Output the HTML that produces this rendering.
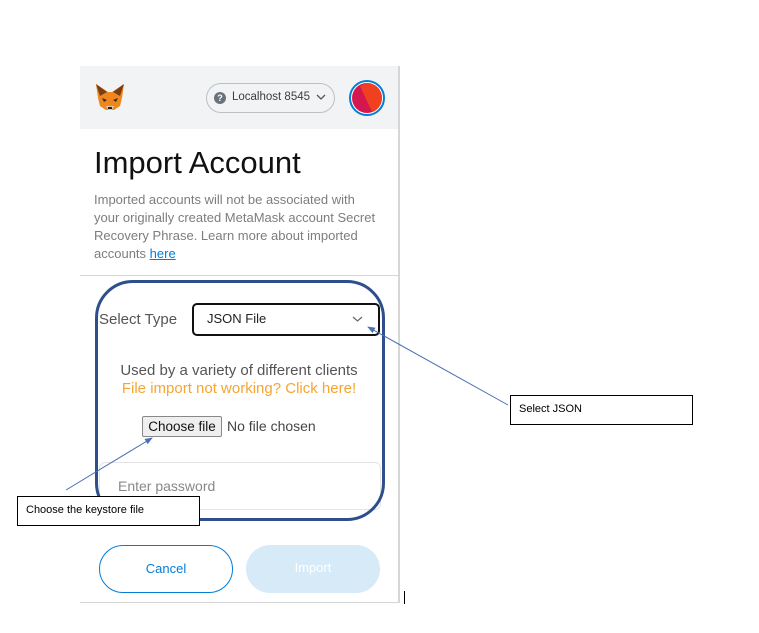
<!DOCTYPE html>
<html><head><meta charset="utf-8"><style>
*{margin:0;padding:0;box-sizing:border-box}
body{width:759px;height:633px;background:#fff;position:relative;overflow:hidden;font-family:"Liberation Sans",sans-serif}
.a{position:absolute}
</style></head><body>
<div class="a" style="left:80px;top:66px;width:320px;height:537px;border-right:2px solid #d6d6d6;border-bottom:1px solid #d6d6d6"></div>
<div class="a" style="left:80px;top:66px;width:318px;height:63px;background:#f2f3f4"></div>
<svg class="a" style="left:94px;top:82px" width="32" height="30" viewBox="0 0 32 30">
<polygon points="2,2 14,10 18,10 30,2 28,16 26,24 20,28 12,28 6,24 4,16" fill="#f0861e"/>
<polygon points="2,2 13,10 6,14" fill="#7a3e14"/>
<polygon points="30,2 19,10 26,14" fill="#7a3e14"/>
<polygon points="8,16 13,18 10,20" fill="#3a2a20"/>
<polygon points="24,16 19,18 22,20" fill="#3a2a20"/>
<polygon points="12,24 20,24 18,28 14,28" fill="#d9c9b8"/>
<rect x="14" y="25" width="4" height="2" fill="#222"/>
</svg>
<div class="a" style="left:206px;top:83px;width:129px;height:30px;border:1px solid #bbc0c5;border-radius:15px;background:#f2f3f4"></div>
<div class="a" style="left:214px;top:92px;width:12px;height:12px;border-radius:50%;background:#6a737d;color:#fff;font-size:9px;font-weight:bold;text-align:center;line-height:12px">?</div>
<div class="a" style="left:232px;top:91px;font-size:11.5px;color:#3c4043">Localhost 8545</div>
<svg class="a" style="left:316px;top:93px" width="10" height="8"><path d="M1 2 L5 6 L9 2" stroke="#555" stroke-width="1.3" fill="none"/></svg>
<div class="a" style="left:349px;top:80px;width:36px;height:36px;border-radius:50%;border:2px solid #037dd6;background:#fff"></div>
<div class="a" style="left:352px;top:83px;width:30px;height:30px;border-radius:50%;background:#d4174f;overflow:hidden"><div style="position:absolute;left:14px;top:-4px;width:26px;height:34px;background:#f0401f;transform:rotate(-25deg)"></div></div>
<div class="a" style="left:94px;top:145px;font-size:31px;color:#111">Import Account</div>
<div class="a" style="left:94px;top:191px;width:300px;font-size:13px;line-height:18px;color:#7d7d7d;white-space:nowrap">Imported accounts will not be associated with<br>your originally created MetaMask account Secret<br>Recovery Phrase. Learn more about imported<br>accounts <span style="color:#037dd6;text-decoration:underline">here</span></div>
<div class="a" style="left:80px;top:275px;width:318px;height:1px;background:#d6d6d6"></div>
<div class="a" style="left:99px;top:311px;font-size:15px;color:#555">Select Type</div>
<div class="a" style="left:192px;top:303px;width:188px;height:33px;border:2px solid #111;border-radius:5px"></div>
<div class="a" style="left:207px;top:311px;font-size:13px;color:#222">JSON File</div>
<svg class="a" style="left:352px;top:315px" width="11" height="8"><path d="M1 2 L5.5 6 L10 2" stroke="#666" stroke-width="1.2" fill="none"/></svg>
<div class="a" style="left:80px;top:362px;width:318px;text-align:center;font-size:15px;color:#555">Used by a variety of different clients</div>
<div class="a" style="left:80px;top:380px;width:318px;text-align:center;font-size:15px;color:#f6a531">File import not working? Click here!</div>
<div class="a" style="left:142px;top:416px;width:80px;height:21px;background:#efefef;border:1px solid #888;border-radius:2px;font-size:13.5px;text-align:center;line-height:19px;color:#111">Choose file</div>
<div class="a" style="left:227px;top:418px;font-size:14px;color:#444">No file chosen</div>
<div class="a" style="left:99px;top:462px;width:282px;height:48px;border:1px solid #e4e4e4;border-radius:6px"></div>
<div class="a" style="left:118px;top:478px;font-size:14px;color:#888">Enter password</div>
<div class="a" style="left:95px;top:280px;width:290px;height:241px;border:3.5px solid #2e4f8c;border-radius:38px"></div>
<div class="a" style="left:99px;top:545px;width:134px;height:48px;border:1px solid #037dd6;border-radius:24px;text-align:center;line-height:46px;font-size:13px;color:#037dd6">Cancel</div>
<div class="a" style="left:246px;top:545px;width:134px;height:48px;background:#d6eaf8;border-radius:24px;text-align:center;line-height:46px;font-size:13px;color:#fff">Import</div>
<div class="a" style="left:404px;top:591px;width:1px;height:13px;background:#000"></div>
<svg class="a" style="left:0;top:0" width="759" height="633">
<defs><marker id="m" markerWidth="8" markerHeight="8" refX="7" refY="4" orient="auto"><path d="M0 1 L8 4 L0 7z" fill="#4a6fb5"/></marker></defs>
<line x1="508" y1="405" x2="368" y2="327" stroke="#4a6fb5" stroke-width="1" marker-end="url(#m)"/>
<line x1="66" y1="490" x2="152" y2="438" stroke="#4a6fb5" stroke-width="1" marker-end="url(#m)"/>
</svg>
<div class="a" style="left:510px;top:395px;width:183px;height:30px;border:1px solid #000;background:#fff;font-size:11px;padding:7px 0 0 8px">Select JSON</div>
<div class="a" style="left:17px;top:496px;width:183px;height:30px;border:1px solid #000;background:#fff;font-size:11px;padding:7px 0 0 8px">Choose the keystore file</div>
</body></html>
